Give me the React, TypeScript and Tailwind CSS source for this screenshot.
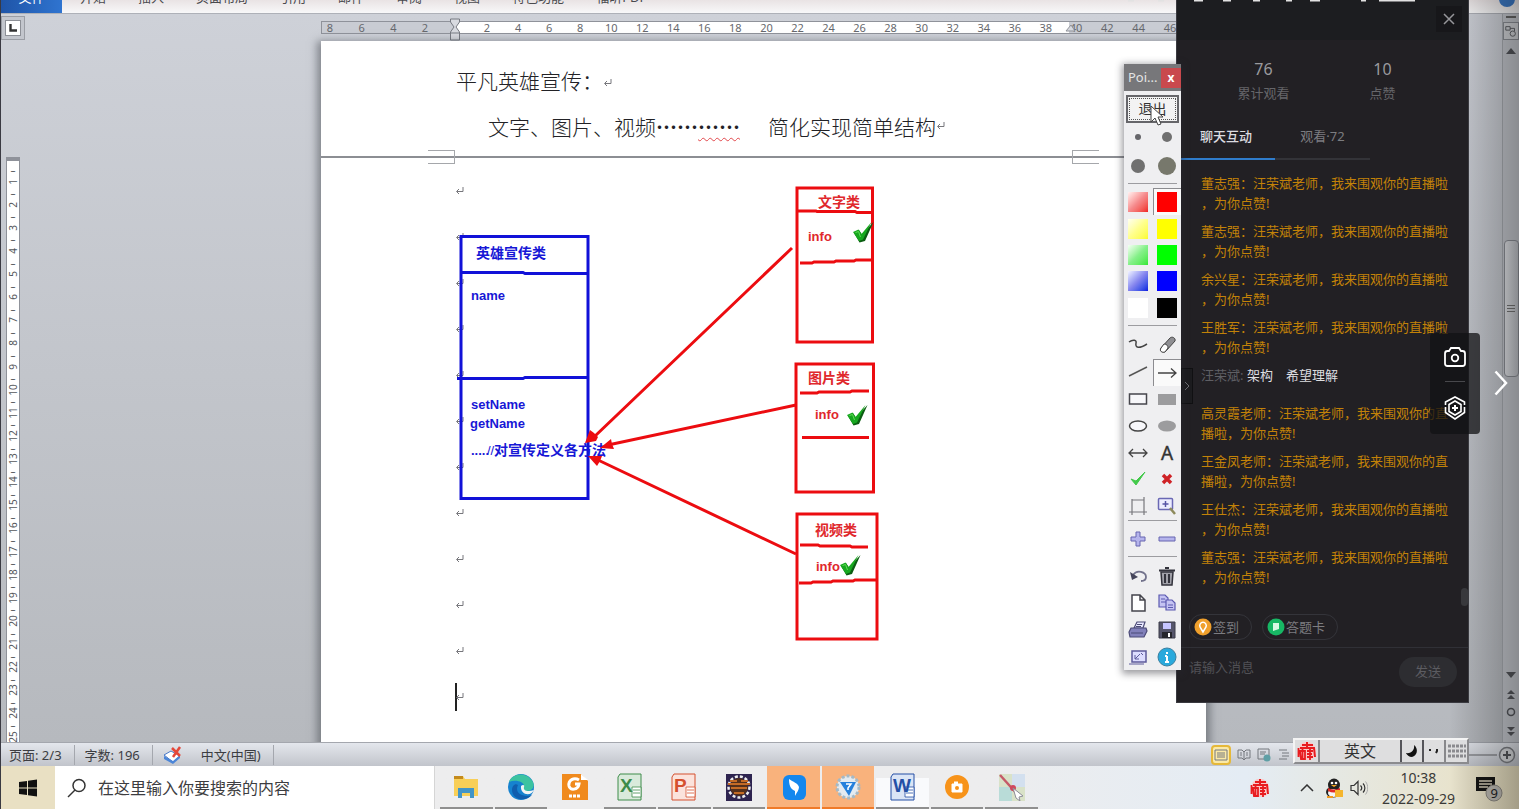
import type { ReactNode } from 'react';

const RIBBON_TABS = ['开始', '插入', '页面布局', '引用', '邮件', '审阅', '视图', '特色功能', '福昕PDF'];
const PARAGRAPHS = Array.from({ length: 12 }, (_, i) => i);
const VERTICAL_TICKS = Array.from({ length: 50 }, (_, i) => (i % 2 === 0 ? '–' : String((i + 1) / 2)));
const LEFT_RULER = ['8', '6', '4', '2'];
const BODY_RULER = Array.from({ length: 19 }, (_, i) => String((i + 1) * 2));
const RIGHT_RULER = ['40', '42', '44', '46'];

interface ChatMessage {
  id: number;
  author: string;
  text: string;
  plain?: boolean;
}

const MESSAGES: ChatMessage[] = [
  { id: 1, author: '董志强：', text: '汪荣斌老师，我来围观你的直播啦，为你点赞!' },
  { id: 2, author: '董志强：', text: '汪荣斌老师，我来围观你的直播啦，为你点赞!' },
  { id: 3, author: '余兴星：', text: '汪荣斌老师，我来围观你的直播啦，为你点赞!' },
  { id: 4, author: '王胜军：', text: '汪荣斌老师，我来围观你的直播啦，为你点赞!' },
  { id: 5, author: '汪荣斌:', text: '架构　希望理解', plain: true },
  { id: 6, author: '高灵霞老师：', text: '汪荣斌老师，我来围观你的直播啦，为你点赞!' },
  { id: 7, author: '王金凤老师：', text: '汪荣斌老师，我来围观你的直播啦，为你点赞!' },
  { id: 8, author: '王仕杰：', text: '汪荣斌老师，我来围观你的直播啦，为你点赞!' },
  { id: 9, author: '董志强：', text: '汪荣斌老师，我来围观你的直播啦，为你点赞!' },
];

function Ribbon() {
  return (
    <nav className="flex h-[14px] shrink-0 items-end gap-8 overflow-hidden border-b border-[#aeb1b8] bg-linear-to-b from-[#e9e3e4] to-[#f8f8f9] text-[13px] leading-5 text-[#4a4a4e]">
      <a href="#file" className="w-[61px] bg-linear-to-r from-[#1f55a8] to-[#2f74d0] pb-1.5 text-center text-white -mr-3.5">
        文件
      </a>
      {RIBBON_TABS.map((tab) => (
        <a key={tab} href={`#${tab}`} className="pb-1.5">
          {tab}
        </a>
      ))}
      <button aria-label="帮助" className="mb-1.5 ml-auto mr-1 h-4 w-4 shrink-0 rounded-full bg-[#3b78c4]" />
    </nav>
  );
}

function VerticalRuler() {
  return (
    <div className="flex w-6 shrink-0 flex-col items-center">
      <button
        aria-label="制表符"
        className="mt-0.5 flex h-6 w-6 shrink-0 items-center justify-center border border-[#9b9ea5] bg-[#c3c6cd]"
      >
        <span className="flex h-4 w-4 items-center justify-center border border-[#8d9097] bg-white">
          <svg viewBox="0 0 8 8" className="h-2 w-2">
            <path d="M1.5 0V6.5H8" fill="none" stroke="#333" strokeWidth="2.4" />
          </svg>
        </span>
      </button>
      <div className="mt-[117px] flex w-3.5 flex-1 flex-col items-center justify-between overflow-hidden border-x border-t-4 border-[#8f929a] bg-white pt-1 text-[10px] leading-[10px] text-[#55575c]">
        {VERTICAL_TICKS.map((label, i) => (
          <span key={i} className="flex h-2.5 w-2.5 items-center justify-center">
            <span className={label === '–' ? '' : '-rotate-90'}>{label}</span>
          </span>
        ))}
      </div>
    </div>
  );
}

function RulerLabels({ labels }: { labels: string[] }) {
  return (
    <>
      {labels.map((label) => (
        <span key={label} className="w-3.5 text-center">
          <span className="-mx-1">{label}</span>
        </span>
      ))}
    </>
  );
}

function HorizontalRuler() {
  return (
    <div className="relative mt-[7px] flex h-[13px] border border-[#8f929a] text-[11px] leading-[11px] text-[#66686d]">
      <div className="flex w-[134px] justify-between bg-[#c9ccd3] pl-px pr-6">
        <RulerLabels labels={LEFT_RULER} />
      </div>
      <div className="flex flex-1 justify-between bg-white pl-6 pr-4">
        <RulerLabels labels={BODY_RULER} />
      </div>
      <div className="flex w-[136px] justify-between bg-[#c9ccd3] pr-7">
        <RulerLabels labels={RIGHT_RULER} />
      </div>
      <svg viewBox="0 0 12 24" className="absolute -top-1 left-[127px] h-6 w-3">
        <path d="M1.5 1h9v3L7 9l3.500 5v8h-9v-8L5 9 1.500 4Z M1.500 15h9" fill="#d8dae0" stroke="#777a82" />
      </svg>
      <svg viewBox="0 0 12 12" className="absolute right-[128px] top-0 h-3 w-3">
        <path d="m1 9 5-6 4 6Z" fill="#d8dae0" stroke="#8f929a" />
      </svg>
    </div>
  );
}

function ReturnMark({ className = '' }: { className?: string }) {
  return (
    <svg viewBox="0 0 10 10" className={`inline-block h-2.5 w-2.5 ${className}`}>
      <path d="M8 1v4.500H2M4 3 1.500 5.500 4 8" fill="none" stroke="#77777c" />
    </svg>
  );
}

function GreenTick({ x, y }: { x: number; y: number }) {
  return (
    <g transform={`translate(${x} ${y})`}>
      <path d="M0 11 5 8 8 12.500 19.500 0 11 19 5.500 20.500Z" fill="#0b5d12" />
      <path d="M-1 10 4.500 7.500 7.500 12 17.500 0 9 17.500 5 19Z" fill="#17a81f" />
      <path d="M1.500 10.500 4.500 9.500 6.500 15" fill="none" stroke="#5fdc55" />
    </g>
  );
}

/* Class diagram drawn by hand over the document */
function ClassDiagram() {
  return (
    <svg
      viewBox="321 41 885 701"
      className="absolute left-0 top-0 h-[701px] w-[885px] font-['Liberation_Sans','Noto_Sans_CJK_SC',sans-serif] font-bold"
    >
      <g fill="none" stroke="#1111d8" strokeWidth="3">
        <rect x="461" y="236.500" width="127" height="262" />
        <path d="M461 272.500h62l2 1h64M457 378.500h66l2-1h64" />
      </g>
      <g fill="#1717d6" fontSize="13">
        <text x="476" y="258" fontSize="14">英雄宣传类</text>
        <text x="471" y="300">name</text>
        <text x="471" y="409">setName</text>
        <text x="470" y="428">getName</text>
        <text x="471" y="455">.....</text>
        <text x="487" y="455" fontWeight="400">//</text>
        <text x="494" y="455" fontSize="14">对宣传定义各方法</text>
      </g>
      <g fill="none" stroke="#ec0c10" strokeWidth="3">
        <rect x="797" y="188" width="75.500" height="154" />
        <path d="M798 211h18l1 .5h38l2 1h15M800 263h12l2-1h20l2-1h18l2-1h16" />
        <rect x="796" y="364" width="77.500" height="128" />
        <path d="M800 393h17l2-1h31l2-1h17M802 437.500h67" />
        <rect x="797" y="514" width="80" height="125" />
        <path d="M800 545h18l2 1h30l2 1h16M799 583h12l2-1h18l2-1h20l2-1h22" />
        <path d="M792 248 594 437M796 405 608 445M796 554 598 460" strokeWidth="3" />
      </g>
      <g fill="#ec0c10">
        <path d="m585 443 5-13 4 3 4 4-2 4Z" />
        <path d="m600 448 11-9 1 5 2 5Z" />
        <path d="m588 456 14 0-2 5-3 5Z" />
      </g>
      <g fill="#e0282c" fontSize="13">
        <text x="818" y="207" fontSize="14">文字类</text>
        <text x="808" y="241">info</text>
        <text x="808" y="383" fontSize="14">图片类</text>
        <text x="815" y="419">info</text>
        <text x="815" y="535" fontSize="14">视频类</text>
        <text x="816" y="571">info</text>
      </g>
      <GreenTick x={854} y={222} />
      <GreenTick x={848} y={405} />
      <GreenTick x={841} y={555} />
    </svg>
  );
}

function PageBreak() {
  return (
    <div className="flex h-3.5 items-center">
      <div className="h-0.5 w-[108px] bg-[#8c8e93]" />
      <div className="-ml-px flex h-3.5 w-[27px] items-center border-y border-r border-[#a5a7ab]">
        <div className="h-0.5 flex-1 bg-[#8c8e93]" />
      </div>
      <div className="h-0.5 flex-1 bg-[#8c8e93]" />
      <div className="-mr-px flex h-3.5 w-[27px] items-center border-y border-l border-[#a5a7ab]">
        <div className="h-0.5 flex-1 bg-[#8c8e93]" />
      </div>
      <div className="h-0.5 w-[108px] bg-[#8c8e93]" />
    </div>
  );
}

function DocumentPage() {
  return (
    <article className="relative mt-[7px] flex-1 bg-white shadow-[0_4px_8px_4px_rgba(70,72,80,0.55)]">
      <div className="pt-4 text-[21px] leading-[46px] font-light text-[#222226] font-['Noto_Sans_CJK_SC',serif]">
        <p className="pl-[135px]">
          平凡英雄宣传：
          <ReturnMark />
        </p>
        <p className="flex items-center pl-[167px]">
          文字、图片、视频<span className="font-bold">……</span>
          <span className="font-bold leading-6 underline decoration-[#e2484c] decoration-wavy decoration-1 underline-offset-2">……</span>
          <span className="ml-7">简化实现简单结构</span>
          <ReturnMark />
        </p>
      </div>
      <div className="mt-px">
        <PageBreak />
      </div>
      <div className="pl-[134px] pt-1">
        {PARAGRAPHS.map((i) => (
          <p key={i} className="flex h-[46px] items-center">
            {i === 11 && <span className="-mr-0.5 h-7 w-0.5 bg-[#222]" />}
            <ReturnMark />
          </p>
        ))}
      </div>
      <ClassDiagram />
    </article>
  );
}

function DocumentScrollbar() {
  return (
    <div className="flex w-[17px] shrink-0 flex-col items-center border-l border-[#a9acb2] bg-[#c6c9cf] text-[#55575c]">
      <span className="mt-0.5 h-0.5 w-2.5 bg-[#666]" />
      <button aria-label="标尺" className="mt-1 h-[18px] w-4 border border-[#8d9097] bg-[#d4d6da]">
        <svg viewBox="0 0 16 16" fill="none" stroke="currentColor">
          <path d="M2 3h5v4H2zM7 5h5v3" />
          <circle cx="10" cy="11" r="3" />
        </svg>
      </button>
      <svg viewBox="0 0 10 6" className="mt-2 h-1.5 w-2.5"><path d="M0 6 5 0l5 6Z" fill="currentColor" /></svg>
      <div className="mt-[186px] flex h-[137px] w-[15px] flex-col items-center justify-center gap-0.5 rounded-sm border border-[#8d9097] bg-linear-to-r from-[#e4e6ea] to-[#c3c6cc]">
        <span className="h-px w-2 bg-[#777]" />
        <span className="h-px w-2 bg-[#777]" />
        <span className="h-px w-2 bg-[#777]" />
      </div>
      <div className="flex-1" />
      <svg viewBox="0 0 12 72" className="h-[72px] w-3">
        <path d="M1 2h10L6 8Z" fill="currentColor" />
        <path d="M2 24l4-4 4 4ZM2 29l4-4 4 4ZM2 57l4 4 4-4ZM2 62l4 4 4-4Z" fill="currentColor" />
        <circle cx="6" cy="42" r="3.500" fill="none" stroke="currentColor" strokeWidth="1.500" />
      </svg>
    </div>
  );
}

function StatusBar() {
  return (
    <footer className="flex h-6 shrink-0 items-center border-t border-[#a4a7ae] bg-linear-to-b from-[#e4e7ed] to-[#c1c4cb] text-[13px] leading-5 text-[#3c3d42]">
      <span className="border-r border-[#a4a7ae] pl-2 pr-3">页面: 2/3</span>
      <span className="border-r border-[#a4a7ae] pl-2.5 pr-3">字数: 196</span>
      <svg viewBox="0 0 20 20" className="ml-2.5 h-5 w-5">
        <path d="m1 10 7-4 9 5-7 6Z" fill="#fff" stroke="#4878c8" />
        <path d="M1 11v3l9 5 7-6v-3l-7 6Z" fill="#4c86d8" />
        <path d="m9 3 8 8m0-9-7 10" stroke="#e4483a" strokeWidth="2.500" />
      </svg>
      <span className="border-r border-[#a4a7ae] pl-[18px] pr-3">中文(中国)</span>
      <div className="ml-auto mr-[228px] flex items-center gap-1.5 text-[#75787e]">
        <button aria-label="页面视图" className="flex h-5 w-5 items-center justify-center rounded-sm border-2 border-[#e5b839] bg-[#fae9a8]">
          <svg viewBox="0 0 14 12" className="h-3 w-3.5"><path d="M1 1h12v10H1zM3 4h8M3 6h8M3 8h8" fill="none" stroke="currentColor" /></svg>
        </button>
        <svg viewBox="0 0 14 12" className="h-3 w-3.5"><path d="M1 1h4l2 2 2-2h4v8H9l-2 2-2-2H1zM7 3v7M3 4h2M3 6h2M9 4h2M9 6h2" fill="none" stroke="currentColor" /></svg>
        <svg viewBox="0 0 14 14" className="h-3.5 w-3.5">
          <path d="M1 1h11v10H1zM3 4h6M3 6h5" fill="none" stroke="currentColor" />
          <circle cx="10" cy="10" r="3.500" fill="#5f9fa5" />
        </svg>
        <svg viewBox="0 0 14 12" className="h-3 w-3.5"><path d="M2 1h8M5 4h7M5 7h7M2 10h8" stroke="currentColor" /></svg>
      </div>
      <span className="-ml-[50px] h-0.5 w-7 bg-[#9a9ca1]" />
      <button aria-label="放大" className="mr-0.5 flex h-5 w-5 items-center justify-center">
        <svg viewBox="0 0 20 20" className="h-5 w-5">
          <circle cx="10" cy="10" r="7.500" fill="#d8dadd" stroke="#7d7f84" strokeWidth="1.500" />
          <path d="M10 6v8M6 10h8" stroke="#55575c" strokeWidth="2" />
        </svg>
      </button>
    </footer>
  );
}

function StampIcon({ className }: { className: string }) {
  return (
    <svg viewBox="0 0 20 20" className={className} fill="none" stroke="#e81c20">
      <path d="M7 1h6l4 3 2 4v6l-3 4-5 1H5l-3-3-1-6 2-6Z" fill="#f9c9c9" stroke="none" />
      <path d="M5 4h11M10 1v5M3 7h14l1 9" strokeWidth="2" />
      <path d="M3 10h5v8H4zM10 10h6M10 13h5M10 16h6M13 8v11M5.500 8v10M1.500 7v9" strokeWidth="1.800" />
    </svg>
  );
}

function OfficeIcon({ letter, color, tint }: { letter: string; color: string; tint: string }) {
  return (
    <svg viewBox="0 0 28 28" className="h-7 w-7">
      <path d="M4 1h21v26H2V4Z" fill={tint} stroke={color} />
      <path d="M16 14h9v10h-9zM17 17h7M17 20h7" fill="#fff" stroke={color} strokeWidth=".8" />
      <text x="4" y="19" fontSize="19" fontWeight="700" fill={color} className="font-['Liberation_Sans',sans-serif]">
        {letter}
      </text>
    </svg>
  );
}

const TASKS: { name: string; cell: string; icon: ReactNode }[] = [
  {
    name: '文件资源管理器',
    cell: 'border-[#8f8f8f]',
    icon: (
      <svg viewBox="0 0 28 28" className="h-7 w-7">
        <path d="M2 3h9l2 3h13v17H2Z" fill="#f8cf58" />
        <path d="M2 3h9v3H2Z" fill="#c48a1c" />
        <path d="M6 15h16v10h-4v-5h-8v5H6Z" fill="#4295c8" />
      </svg>
    ),
  },
  {
    name: 'Edge',
    cell: 'border-[#8f8f8f]',
    icon: (
      <svg viewBox="0 0 28 28" className="h-7 w-7">
        <circle cx="14" cy="14" r="13" fill="#1682cf" />
        <path d="M2 9C5 0 20-2 26 9c2 5-1 9-6 9-3 0-5-1-3-4 1-5-8-8-15-5Z" fill="#3cc3a0" />
        <path d="M14 13c2-2 4-1 3 1-1 4 4 5 10 3-3 7-14 5-13-4Z" fill="#f2f5f5" />
        <path d="M11 12c-4 8 5 13 14 10-8 8-20 4-20-5 0-4 3-7 6-5Z" fill="#105eae" />
      </svg>
    ),
  },
  {
    name: '福昕PDF',
    cell: 'border-transparent',
    icon: (
      <svg viewBox="0 0 28 28" className="h-7 w-7">
        <path d="M1 1h19l7 7v19H1Z" fill="#f08a1d" />
        <path d="M20 1v6h7" fill="#fff" />
        <path d="M18 7c-5-3-11 0-10 6 1 5 9 4 10-2h-4" fill="none" stroke="#fff" strokeWidth="3" />
        <path d="M8 23h12" stroke="#fff" strokeWidth="3" strokeDasharray="3 1" />
      </svg>
    ),
  },
  { name: 'Excel', cell: 'border-[#8f8f8f]', icon: <OfficeIcon letter="X" color="#3e8c4a" tint="#d9eadb" /> },
  { name: 'PowerPoint', cell: 'border-[#8f8f8f]', icon: <OfficeIcon letter="P" color="#d5502e" tint="#fbe3dc" /> },
  {
    name: 'Eclipse',
    cell: 'border-[#8f8f8f]',
    icon: (
      <svg viewBox="0 0 28 28" className="h-7 w-7">
        <rect x="1" y="1" width="26" height="27" fill="#2e2450" />
        <circle cx="14" cy="14" r="10.500" fill="none" stroke="#eee" strokeWidth="2.500" strokeDasharray="3 2" />
        <circle cx="14" cy="14" r="9" fill="#54301c" />
        <path d="M3 11h22M6 15h16M5 8h7m4 0h7M9 20h10" stroke="#c56b26" strokeWidth="2" />
      </svg>
    ),
  },
  {
    name: '钉钉',
    cell: 'bg-[#f9b27c] border-[#f07a28]',
    icon: (
      <svg viewBox="0 0 28 28" className="h-7 w-7">
        <rect x="3" y="2" width="23" height="25" rx="6" fill="#1487ee" />
        <path d="M9 6c4 3 9 4 10 8 0 3-2 5-4 9v-5c-5-2-6-7-6-12Z" fill="#fff" />
      </svg>
    ),
  },
  {
    name: 'PointoFix',
    cell: 'bg-[#f9b27c] border-[#f07a28]',
    icon: (
      <svg viewBox="0 0 28 28" className="h-7 w-7">
        <circle cx="14" cy="14" r="11" fill="#e4ebf1" stroke="#a3b9c7" strokeWidth="3" strokeDasharray="3 2" />
        <path d="M6 9h16l-7 14Z" fill="#2480dc" />
        <path d="M12 11h5l-3 4v2" fill="none" stroke="#fff" strokeWidth="1.500" />
      </svg>
    ),
  },
  {
    name: 'Word',
    cell: 'bg-linear-to-b from-[#ededee] from-30% to-[#f9fafc] to-30% border-[#8f8f8f]',
    icon: <OfficeIcon letter="W" color="#244fa5" tint="#dbe5f6" />,
  },
  {
    name: '直播',
    cell: 'border-[#8f8f8f]',
    icon: (
      <svg viewBox="0 0 28 28" className="h-7 w-7">
        <circle cx="14" cy="14" r="12" fill="#f7931a" />
        <path d="M9 11h10v8H9Z" fill="#fff" stroke="#fff" strokeLinejoin="round" />
        <path d="M11 10h4" stroke="#fff" strokeWidth="3" />
        <circle cx="14" cy="15" r="2" fill="#f7931a" />
      </svg>
    ),
  },
  {
    name: '画图',
    cell: 'border-[#8f8f8f]',
    icon: (
      <svg viewBox="0 0 28 28" className="h-7 w-7">
        <path d="M1 1h26v27H1Z" fill="#d9e2c8" />
        <path d="M1 14h13v14H1Z" fill="#b9dcd8" />
        <path d="M14 1h13v13H14Z" fill="#d3e0ef" />
        <path d="m2 2 18 20" stroke="#c55a68" strokeWidth="2.500" />
        <circle cx="15" cy="15" r="3" fill="#d0495c" />
        <path d="m15 15 10 8-4 1 1 4-4-3Z" fill="#fff" stroke="#8d8d98" />
      </svg>
    ),
  },
];

function Taskbar() {
  return (
    <div className="flex h-[43px] shrink-0 bg-linear-to-r from-[#ededee] from-65% via-[#e4ecf4] via-82% to-[#e9e0c0]">
      <button aria-label="开始" className="flex w-[54px] items-center justify-center bg-[#e9e0c3]">
        <svg viewBox="0 0 18 18" className="h-[18px] w-[18px]">
          <path d="M0 3 8 2v6.500H0ZM9 1.800 18 .5v8H9ZM0 9.500h8V16l-8-1ZM9 9.500h9v8l-9-1.300Z" fill="#111" />
        </svg>
      </button>
      <label className="flex w-[380px] items-center border-r border-[#d5d5d5] bg-white pl-3">
        <svg viewBox="0 0 20 20" className="h-5 w-5 shrink-0">
          <circle cx="12" cy="7.500" r="6" fill="none" stroke="#333" strokeWidth="1.500" />
          <path d="m8 12-7 7" stroke="#333" strokeWidth="1.500" />
        </svg>
        <input
          type="search"
          aria-label="搜索"
          placeholder="在这里输入你要搜索的内容"
          className="ml-[11px] w-full bg-transparent text-base outline-none placeholder:text-[#3d3d40]"
        />
      </label>
      <div className="ml-1 grid w-[600px] grid-cols-11">
        {TASKS.map((task) => (
          <button
            key={task.name}
            aria-label={task.name}
            className="flex px-px"
          >
            <span className={`flex h-full w-full items-center justify-center border-b-2 ${task.cell}`}>{task.icon}</span>
          </button>
        ))}
      </div>
      <div className="ml-auto flex items-center">
        <StampIcon className="h-5 w-5" />
        <svg viewBox="0 0 14 8" className="ml-[30px] h-2 w-3.5"><path d="m1 7 6-6 6 6" fill="none" stroke="#333" strokeWidth="1.500" /></svg>
        <svg viewBox="0 0 20 20" className="ml-2.5 h-5 w-5">
          <ellipse cx="10" cy="7" rx="6" ry="6.500" fill="#222" />
          <ellipse cx="9" cy="14" rx="7" ry="5.500" fill="#222" />
          <ellipse cx="9" cy="15" rx="5" ry="4" fill="#f5f5f5" />
          <path d="M4 10c4 2 8 2 12 0v3c-4 2-8 2-12 0Z" fill="#e02a26" />
          <path d="M7 7h6l-3 2Z" fill="#f6a821" />
          <circle cx="8" cy="5" r="1.300" fill="#fff" />
          <circle cx="12" cy="5" r="1.300" fill="#fff" />
          <path d="M11 12h8v7h-8Z" fill="#f5b52c" />
          <path d="M3 19h6" stroke="#f09a20" strokeWidth="2" />
        </svg>
        <svg viewBox="0 0 18 16" className="ml-1.5 h-4 w-[18px]" fill="none" stroke="#333">
          <path d="M1 5.500h3l4-4v13l-4-4H1ZM10.500 5.500c1.500 1.500 1.500 3.500 0 5M13 3.500c2.500 2.500 2.500 6.500 0 9" strokeWidth="1.200" />
          <path d="M15.500 1.500c3 4 3 9 0 13" stroke="#aaa" />
        </svg>
        <div className="ml-3.5 text-center text-[14px] leading-[21px] text-[#3a3a38]">
          <div>10:38</div>
          <div>2022-09-29</div>
        </div>
        <button aria-label="通知" className="ml-5 mr-4 flex">
          <svg viewBox="0 0 28 28" className="h-7 w-7">
            <path d="M1 3h19v14h-3v5l-5-5H1Z" fill="#151515" />
            <path d="M4 7h13M4 10h13M4 13h9" stroke="#d8d0ba" strokeWidth="1.500" />
            <circle cx="19" cy="19" r="8" fill="#bcb9b2" stroke="#8d8a82" />
            <text x="15.500" y="24" fontSize="13" fill="#222">9</text>
          </svg>
        </button>
      </div>
    </div>
  );
}

function Separator() {
  return <div className="mx-1 h-px bg-[#9c9ca0]" />;
}

function ToolCell({ label, active, children }: { label: string; active?: boolean; children: ReactNode }) {
  return (
    <button
      aria-label={label}
      className={
        active
          ? 'flex items-center justify-center border-l border-t border-[#8c8c90] bg-[#fafafa]'
          : 'flex items-center justify-center'
      }
    >
      {children}
    </button>
  );
}

const SWATCHES = [
  { name: '淡红', color: 'bg-linear-to-br from-[#fff2f2] via-[#f58a8c] to-[#ef1d22]' },
  { name: '红', color: 'bg-[#ff0000]' },
  { name: '淡黄', color: 'bg-linear-to-br from-[#ffffee] via-[#ffff8a] to-[#fbfb20]' },
  { name: '黄', color: 'bg-[#ffff00]' },
  { name: '淡绿', color: 'bg-linear-to-br from-[#f4fff4] via-[#86f08a] to-[#2fe82f]' },
  { name: '绿', color: 'bg-[#00ff00]' },
  { name: '淡蓝', color: 'bg-linear-to-br from-[#f4f4ff] via-[#8484ee] to-[#1414e0]' },
  { name: '蓝', color: 'bg-[#0000ff]' },
  { name: '淡白', color: 'bg-white' },
  { name: '黑', color: 'bg-black' },
];

const DRAW_TOOLS: { name: string; icon: ReactNode }[] = [
  { name: '自由线', icon: <path d="M1 7c4-3 8-2 7 1-1 5 3 6 11 1" fill="none" stroke="#444" strokeWidth="1.500" /> },
  {
    name: '橡皮擦',
    icon: (
      <g stroke="#444">
        <path d="m4 13 9-10c2-2 6 0 5 3l-9 10c-2 2-7 1-5-3Z" fill="#8f8f93" />
        <path d="m4 13 3-4c3 0 4 2 4 4l-3 4c-3 1-6-1-4-4Z" fill="#fff" />
      </g>
    ),
  },
  { name: '直线', icon: <path d="m1 14 18-9" stroke="#555" strokeWidth="1.500" /> },
  { name: '箭头', icon: <path d="M1 10h18M14 5.500l5 4.500-5 4.500" fill="none" stroke="#444" strokeWidth="1.300" /> },
  { name: '矩形', icon: <rect x="1.500" y="5" width="17" height="10" fill="#f7f7fa" stroke="#46464c" strokeWidth="1.500" /> },
  { name: '实心矩形', icon: <rect x="1" y="5" width="18" height="11" fill="#9c9c9e" /> },
  { name: '椭圆', icon: <ellipse cx="10" cy="10" rx="8.500" ry="5" fill="#f7f7fa" stroke="#444" strokeWidth="1.500" /> },
  { name: '实心椭圆', icon: <ellipse cx="10" cy="10" rx="9" ry="5.500" fill="#9c9c9e" /> },
  { name: '双箭头', icon: <path d="M1 10h18M5 6l-4 4 4 4M15 6l4 4-4 4" fill="none" stroke="#444" strokeWidth="1.300" /> },
  {
    name: '文本',
    icon: <text x="4" y="17" fontSize="19" fill="#333" stroke="#333" strokeWidth=".4">A</text>,
  },
  { name: '对勾', icon: <path d="m3 10 5 6L17 3 8 12Z" fill="#42c94a" stroke="#42c94a" /> },
  { name: '叉', icon: <path d="m6 6 8 8m0-8-8 8" stroke="#cf2226" strokeWidth="3.500" /> },
  { name: '裁剪', icon: <path d="M4 3v16M1 16h18M4 4h12M16 1v18" fill="none" stroke="#77777c" strokeWidth="1.200" /> },
  {
    name: '放大镜',
    icon: (
      <g>
        <rect x="1.500" y="2.500" width="14" height="11" rx="1" fill="#ececff" stroke="#6a68b4" strokeWidth="1.500" />
        <path d="M8.500 5v6M5.500 8h6" stroke="#5553a6" strokeWidth="1.500" />
        <path d="m13 12 5 6" stroke="#8d8a5c" strokeWidth="2.500" />
      </g>
    ),
  },
];

const FILE_TOOLS: { name: string; icon: ReactNode }[] = [
  {
    name: '撤销',
    icon: (
      <g>
        <path d="M5 9c4-6 13-3 13 2 0 3-2 4-5 4" fill="none" stroke="#72728c" strokeWidth="1.800" />
        <path d="m2 6 2 8 6-3Z" fill="#44445a" />
      </g>
    ),
  },
  {
    name: '清空',
    icon: (
      <g stroke="#33333c" fill="none">
        <path d="M4 6h12l-1 13H5Z" fill="#a0a0a8" strokeWidth="1.500" />
        <path d="M2 4.500h16M8 2h4M8 8v9M12 8v9" strokeWidth="2" />
      </g>
    ),
  },
  { name: '新建', icon: <path d="M4 2h8l5 5v11H4ZM12 2v5h5" fill="#fff" stroke="#44444c" strokeWidth="1.500" /> },
  {
    name: '复制',
    icon: (
      <g fill="#c4c3f2" stroke="#5b59b0" strokeWidth="1.200">
        <path d="M2 2h6l3 3v9H2ZM4 6h4M4 9h5" />
        <path d="M9 7h6l3 3v7H9ZM11 12h5M11 14.500h5" />
      </g>
    ),
  },
  {
    name: '打印',
    icon: (
      <g stroke="#4b4a76" strokeWidth="1.200">
        <path d="M6 8 9 2h8l-2 6Z" fill="#e9e9ff" />
        <path d="M3 8h15l1 3-3 6H2l-1-5Z" fill="#8180ba" />
        <path d="M3 13h12M9 4.500h5M8 6.500h5" />
      </g>
    ),
  },
  {
    name: '保存',
    icon: (
      <g>
        <path d="M2 2h16v16H2Z" fill="#55556a" stroke="#3c3c48" />
        <path d="M6 3h8v6H6Z" fill="#c6c5ff" />
        <path d="M5 12h10v6H5Z" fill="#26262c" />
        <path d="M11 13h2v4h-2Z" fill="#fff" />
      </g>
    ),
  },
  {
    name: '最小化',
    icon: (
      <g fill="none" stroke="#5d5b9c">
        <path d="M4 4h14v11H4Z" fill="#dcdcff" strokeWidth="1.500" />
        <path d="M1 17h15M7 12l5-5M7 8v4h4M13 6l2 2" />
      </g>
    ),
  },
  {
    name: '关于',
    icon: (
      <g>
        <circle cx="10" cy="10" r="9" fill="#29a9dc" stroke="#3b7fa0" />
        <path d="M10 9v6M8 15h4M8 9h2M10 5v2" stroke="#fff" strokeWidth="2" />
      </g>
    ),
  },
];

function Glyph({ children }: { children: ReactNode }) {
  return (
    <svg viewBox="0 0 20 20" className="h-5 w-5">
      {children}
    </svg>
  );
}

/* Floating drawing palette */
function PointerPalette() {
  return (
    <section className="absolute right-[338px] top-16 z-20 flex w-[57px] flex-col bg-[#efeff1] shadow-[0_2px_7px_2px_rgba(40,40,48,0.45)]">
      <header className="flex h-[27px] items-center justify-between bg-[#77777a] pl-1 text-[13px] text-[#e4e4e4]">
        Poi...
        <button aria-label="关闭" className="flex h-5 w-5 items-center justify-center bg-[#c9494d] text-xs font-bold text-white">
          x
        </button>
      </header>
      <button className="mx-0.5 mb-0.5 mt-1 flex h-7 items-center justify-center border-2 border-[#66666a] bg-[#f3f3f3] p-px text-[14px] text-[#333]">
        <span className="h-full w-full border border-dotted border-[#555] leading-5">退出</span>
      </button>
      <div className="mb-px grid h-[57px] grid-cols-2">
        <ToolCell label="1">
          <span className="h-1.5 w-1.5 rounded-full bg-[#66666a]" />
        </ToolCell>
        <ToolCell label="2">
          <span className="h-2.5 w-2.5 rounded-full bg-[#707070]" />
        </ToolCell>
        <ToolCell label="3">
          <span className="h-3.5 w-3.5 rounded-full bg-[#707070]" />
        </ToolCell>
        <ToolCell label="4">
          <span className="h-[18px] w-[18px] rounded-full bg-[#77786c]" />
        </ToolCell>
      </div>
      <Separator />
      <div className="my-1 grid h-[133px] grid-cols-2">
        {SWATCHES.map((swatch) => (
          <ToolCell key={swatch.name} label={swatch.name} active={swatch.name === '红'}>
            <span className={`h-5 w-5 ${swatch.color}`} />
          </ToolCell>
        ))}
      </div>
      <Separator />
      <div className="mb-px mt-1.5 grid h-[187px] grid-cols-2">
        {DRAW_TOOLS.map((tool) => (
          <ToolCell key={tool.name} label={tool.name} active={tool.name === '箭头'}>
            <Glyph>{tool.icon}</Glyph>
          </ToolCell>
        ))}
      </div>
      <Separator />
      <div className="my-1 grid h-[27px] grid-cols-2">
        <ToolCell label="加">
          <Glyph><path d="M8 3h4v5h5v4h-5v5H8v-5H3V8h5Z" fill="#b5b4ec" stroke="#6765b0" /></Glyph>
        </ToolCell>
        <ToolCell label="减">
          <Glyph><path d="M2 8h16v4H2Z" fill="#b5b4ec" stroke="#6765b0" /></Glyph>
        </ToolCell>
      </div>
      <Separator />
      <div className="mt-1.5 grid h-[107px] grid-cols-2">
        {FILE_TOOLS.map((tool) => (
          <ToolCell key={tool.name} label={tool.name}>
            <Glyph>{tool.icon}</Glyph>
          </ToolCell>
        ))}
      </div>
      <svg viewBox="0 0 14 22" className="absolute left-[26px] top-[41px] h-[22px] w-3.5">
        <path d="M1 1v16l4-4 3 7 3-1-3-7h5Z" fill="#fff" stroke="#444" />
      </svg>
    </section>
  );
}

function LivePanel() {
  return (
    <aside className="absolute right-[50px] top-0 z-10 flex h-[703px] w-[293px] flex-col border border-t-0 border-[#3a3a40] bg-[#222024] text-[13px] text-[#7c7c80]">
      <header className="flex h-10 shrink-0 justify-end bg-[#1c1d20] px-1.5 pt-1.5">
        <button aria-label="关闭" className="flex h-[26px] w-[26px] items-center justify-center bg-[#17171a]">
          <svg viewBox="0 0 12 12" className="h-3 w-3"><path d="m1 1 10 10M11 1 1 11" stroke="#96969a" strokeWidth="1.500" /></svg>
        </button>
      </header>
      <div className="grid grid-cols-2 pl-[27px] pr-[26px] pt-[17px] text-center">
        <div>
          <div className="text-base leading-6 text-[#9a9a9e]">76</div>
          <div className="leading-6 text-[#66666a]">累计观看</div>
        </div>
        <div>
          <div className="text-base leading-6 text-[#9a9a9e]">10</div>
          <div className="leading-6 text-[#66666a]">点赞</div>
        </div>
      </div>
      <div className="mt-[17px] flex leading-6">
        <button className="h-[38px] w-[98px] border-b-2 border-[#2f7ccb] pb-2 text-center font-medium text-[#dcdce0]">聊天互动</button>
        <button className="h-[38px] w-[95px] border-b-2 border-[#333338] pb-2 text-center text-[#7c7c80]">观看·72</button>
      </div>
      <div className="flex-1 pl-6 pr-3.5 pt-[13px] leading-5">
        {MESSAGES.map((m) =>
          m.plain ? (
            <p key={m.id} className="mb-[18px] text-[#dedee0]">
              <span className="text-[#5f5f64]">{m.author}</span> {m.text}
            </p>
          ) : (
            <p key={m.id} className="mb-2 text-[#c28208] [line-break:anywhere]">
              {m.author + m.text}
            </p>
          ),
        )}
      </div>
      <div className="flex gap-2.5 border-b border-[#303036] pb-[7px] pl-3 leading-6">
        <button className="flex items-center gap-px rounded-full border border-[#34343a] px-1 pr-3">
          <svg viewBox="0 0 18 18" className="h-[18px] w-[18px]">
            <circle cx="9" cy="9" r="8.500" fill="#f0a02c" />
            <path d="M9 14 6 9a3.300 3.300 0 1 1 6 0Z" fill="none" stroke="#fff" strokeWidth="1.500" />
          </svg>
          签到
        </button>
        <button className="flex items-center gap-px rounded-full border border-[#34343a] px-1 pr-3">
          <svg viewBox="0 0 18 18" className="h-[18px] w-[18px]">
            <circle cx="9" cy="9" r="8.500" fill="#17b765" />
            <path d="M6 5h6v6l-6 2Z" fill="#d8f8e4" />
          </svg>
          答题卡
        </button>
      </div>
      <div className="flex h-[54px] shrink-0 items-start justify-between pl-3 pr-[11px] pt-[9px]">
        <input
          type="text"
          aria-label="消息"
          placeholder="请输入消息"
          className="h-5 w-40 bg-transparent outline-none placeholder:text-[#515156]"
        />
        <button className="h-[30px] w-[58px] rounded-full bg-[#2d2d31] text-[13px] text-[#5c5c61]">发送</button>
      </div>
      <span className="absolute bottom-24 right-0 h-[18px] w-[7px] rounded-sm bg-[#38383c]" />
      <button aria-label="收起" className="absolute left-1 top-[368px] flex h-9 w-3 items-center justify-center border border-[#101012] bg-[#1c1c1f]">
        <svg viewBox="0 0 6 10" className="h-2.5 w-1.5"><path d="m1 1 4 4-4 4" fill="none" stroke="#707074" /></svg>
      </button>
    </aside>
  );
}

/* Controls that the video player shows over the picture */
function PlayerControls() {
  return (
    <>
      <div className="absolute right-[39px] top-[333px] z-30 flex h-[101px] w-[50px] flex-col items-center justify-between rounded-sm bg-[#121214]/75 px-3 py-3.5 text-white">
        <button aria-label="截图">
          <svg viewBox="0 0 22 20" className="h-5 w-[22px]" fill="none" stroke="currentColor" strokeWidth="1.800">
            <path d="M7 1h8l2 3h1.500q2.500 0 2.500 2.500v10q0 2.500-2.500 2.500h-15Q1 19 1 16.500v-10Q1 4 3.500 4H5Z" />
            <circle cx="11" cy="11" r="3.300" />
          </svg>
        </button>
        <span className="h-px w-5 bg-[#48484c]" />
        <button aria-label="画质增强">
          <svg viewBox="0 0 22 24" className="h-6 w-[22px]" fill="none" stroke="currentColor" strokeWidth="1.600">
            <path d="M1.500 9V6L11 1l9.500 5v3M1.500 11v5.500L11 23l9.500-6.500V11" />
            <path d="m11 5 6 3.500v7L11 19l-6-3.500v-7Z" />
            <path d="M11 9v6M8 12h6" strokeWidth="2" />
          </svg>
        </button>
      </div>
      <button aria-label="下一个" className="absolute right-[11px] top-[370px] z-30">
        <svg viewBox="0 0 14 26" className="h-[26px] w-3.5"><path d="m1.500 1.500 10.500 11.500L1.500 24.500" fill="none" stroke="#fff" strokeWidth="2.500" /></svg>
      </button>
      <svg viewBox="0 0 300 4" className="absolute right-[99px] top-0 z-30 h-1 w-[300px]">
        <path d="M8 0h6M38 0h6M74 0h9M103 0h8M133 0h7M166 0h6M190 0h10M241 0h5M259 0h36" stroke="#e2e2e2" strokeWidth="3" />
      </svg>
    </>
  );
}

function InputMethodBar() {
  return (
    <div className="absolute bottom-[45px] right-[50px] z-20 flex h-[26px] w-[176px] items-stretch border-2 border-[#8b8b8e] border-l-[#f4f4f4] border-t-[#f4f4f4] bg-[#dededf] text-base leading-[22px] text-[#333]">
      <button aria-label="输入法" className="flex w-[25px] items-center justify-center border-r-2 border-[#88888b]">
        <StampIcon className="h-5 w-5" />
      </button>
      <button className="flex-1 border-r-2 border-[#55555a]">英文</button>
      <button aria-label="半角" className="flex w-[22px] items-center justify-center border-r-2 border-[#55555a]">
        <svg viewBox="0 0 14 14" className="h-3.5 w-3.5"><path d="M9 1c5 4 3 11-2 12-3 0-5-2-6-4 5 1 9-3 8-8Z" fill="#111" /></svg>
      </button>
      <button aria-label="标点" className="flex w-[22px] items-center justify-center border-r-2 border-[#88888b]">
        <svg viewBox="0 0 14 8" className="h-2 w-3.5"><path d="M3 2v2M10 2v2l-1 2" stroke="#222" strokeWidth="2" /></svg>
      </button>
      <button aria-label="软键盘" className="flex w-[21px] items-center justify-center">
        <svg viewBox="0 0 18 14" className="h-3.5 w-[18px]"><path d="M0 2h18M0 7h18M0 12h18" stroke="#8a8a8e" strokeWidth="3" strokeDasharray="3 1" /></svg>
      </button>
    </div>
  );
}

export default function App() {
  return (
    <div className="relative flex h-screen flex-col overflow-hidden border-l border-[#3a3a42] bg-[#c9ccd3] font-['Noto_Sans','Noto_Sans_CJK_SC',sans-serif]">
      <Ribbon />
      <main className="flex min-h-0 flex-1 overflow-hidden bg-linear-to-b from-[#ced1d8] to-[#b6b9be]">
        <VerticalRuler />
        <div className="flex flex-1 justify-center overflow-hidden">
          <div className="flex w-[885px] flex-col">
            <HorizontalRuler />
            <DocumentPage />
          </div>
        </div>
        <DocumentScrollbar />
      </main>
      <StatusBar />
      <Taskbar />
      <div className="pointer-events-none absolute inset-y-0 right-0 w-[70px] bg-linear-to-r from-transparent to-black/30" />
      <LivePanel />
      <PointerPalette />
      <InputMethodBar />
      <PlayerControls />
    </div>
  );
}
